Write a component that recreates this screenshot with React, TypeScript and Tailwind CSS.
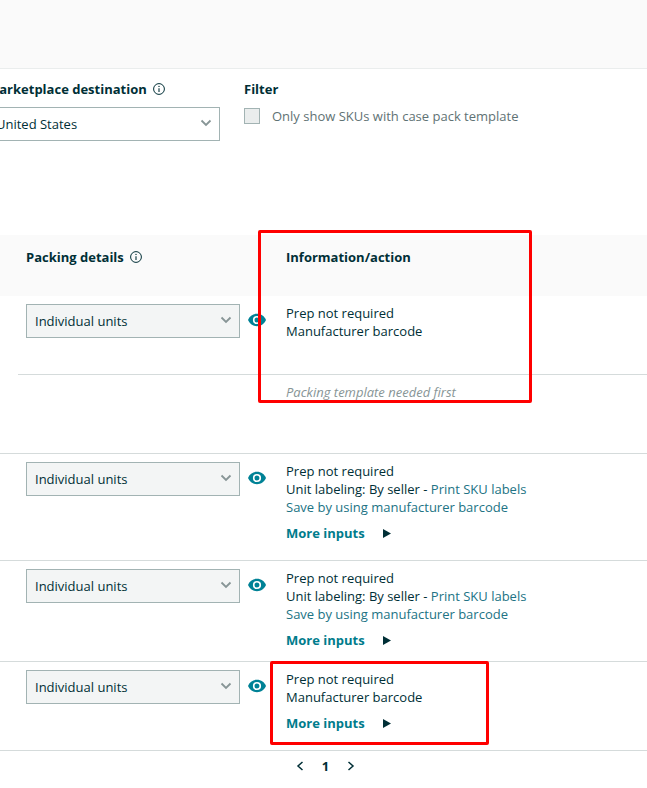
import { useState } from 'react';

type Row = {
  id: string;
  height: string;
  lines: string[];
  unitLabeling?: boolean;
  moreInputs?: boolean;
  hasTemplateRow?: boolean;
};

const rows: Row[] = [
  {
    id: 'sku-1',
    height: 'h-[79px]',
    lines: ['Prep not required', 'Manufacturer barcode'],
    hasTemplateRow: true,
  },
  {
    id: 'sku-2',
    height: 'h-[107px]',
    lines: ['Prep not required'],
    unitLabeling: true,
    moreInputs: true,
  },
  {
    id: 'sku-3',
    height: 'h-[101px]',
    lines: ['Prep not required'],
    unitLabeling: true,
    moreInputs: true,
  },
  {
    id: 'sku-4',
    height: 'h-[89px]',
    lines: ['Prep not required', 'Manufacturer barcode'],
    moreInputs: true,
  },
];

function InfoIcon() {
  return (
    <svg viewBox="0 0 12 12" className="h-3 w-3 shrink-0" fill="none" aria-hidden="true">
      <circle cx="6" cy="6" r="5.4" stroke="#002f36" strokeWidth="1" />
      <path d="M6 5.2V9" stroke="#002f36" strokeWidth="1.1" />
      <circle cx="6" cy="3.4" r="0.7" fill="#002f36" />
    </svg>
  );
}

function EyeIcon() {
  return (
    <svg viewBox="0 0 18 14" className="h-3.5 w-[18px]" aria-hidden="true">
      <path
        fill="#008296"
        fillRule="evenodd"
        d="M9 .8C4.9.8 1.5 3.3 0 7c1.5 3.7 4.900 6.200 9 6.200S16.500 10.700 18 7C16.500 3.300 13.100.8 9 .8Zm0 10.300a4.100 4.100 0 1 1 0-8.200 4.100 4.100 0 0 1 0 8.200Zm0-6.600a2.500 2.500 0 1 0 0 5 2.500 2.500 0 0 0 0-5Z"
      />
    </svg>
  );
}

function SelectBox({ id, label, option, className }: { id: string; label?: string; option: string; className: string }) {
  return (
    <div className="relative">
      <select
        id={id}
        aria-label={label}
        className={`block h-[34px] appearance-none rounded-none border border-[#a2b3b3] px-2 text-[13px] text-[#002f36] ${className}`}
      >
        <option>{option}</option>
      </select>
      <svg
        viewBox="0 0 12 8"
        className="pointer-events-none absolute top-3 right-2 h-2 w-3"
        fill="none"
        aria-hidden="true"
      >
        <path d="M1.500 1.500 6 6l4.500-4.500" stroke="#879596" strokeWidth="1.800" />
      </svg>
    </div>
  );
}

function Information({ row }: { row: Row }) {
  return (
    <>
      {row.lines.map((line) => (
        <p key={line}>{line}</p>
      ))}
      {row.unitLabeling && (
        <>
          <p>
            Unit labeling: By seller -{' '}
            <a href="#print" className="text-[#217384]">
              Print SKU labels
            </a>
          </p>
          <p>
            <a href="#barcode" className="text-[#217384]">
              Save by using manufacturer barcode
            </a>
          </p>
        </>
      )}
      {row.moreInputs && (
        <button type="button" className="mt-2 flex items-center gap-[18px] font-bold text-[#007c8c]">
          More inputs
          <svg viewBox="0 0 8 9" className="h-[9px] w-2" aria-hidden="true">
            <path d="M0 0v9l8-4.500Z" fill="#002f36" />
          </svg>
        </button>
      )}
    </>
  );
}

function SkuRow({ row }: { row: Row }) {
  const line = 'border-b border-[#d5dbdb]';

  return (
    <>
      <tr className={`${row.height} align-top`}>
        <td className={row.hasTemplateRow ? '' : line}></td>
        <td className={`pt-2 pl-2 ${line}`}>
          <div className="flex items-start gap-2">
            <SelectBox
              id={row.id}
              label="Packing details"
              option="Individual units"
              className="w-[214px] bg-[#f3f5f5]"
            />
            <button type="button" aria-label="View packing details" className="mt-2 h-4">
              <EyeIcon />
            </button>
          </div>
        </td>
        <td className={`pt-2 pl-2 ${line}`}>
          <Information row={row} />
        </td>
      </tr>
      {row.hasTemplateRow && (
        <tr className="h-[79px] align-top">
          <td className={line}></td>
          <td className={line}></td>
          <td className={`pt-2 pl-2 text-[#879596] italic ${line}`}>Packing template needed first</td>
        </tr>
      )}
    </>
  );
}

export default function App() {
  const [onlyTemplates, setOnlyTemplates] = useState(false);

  return (
    <div className="relative min-h-screen overflow-hidden bg-white font-['Open_Sans','Noto_Sans',sans-serif] text-[13px] leading-[18px] text-[#002f36]">
      <header className="h-[69px] border-b border-[#eaeded] bg-[#fafafa]"></header>

      <section className="flex h-[166px] items-start gap-6 pt-[11px]">
        <div className="-ml-[13px]">
          <div className="flex items-center gap-1.5 font-bold">
            <label htmlFor="marketplace">Marketplace destination</label>
            <InfoIcon />
          </div>
          <div className="mt-[9px]">
            <SelectBox id="marketplace" option="United States" className="w-[233px] bg-white" />
          </div>
        </div>
        <div>
          <h2 className="font-bold">Filter</h2>
          <label className="mt-[9px] flex items-center gap-3 text-[#5f7274]">
            <input
              type="checkbox"
              checked={onlyTemplates}
              onChange={(e) => setOnlyTemplates(e.target.checked)}
              className="h-4 w-4 appearance-none border border-[#a2b3b3] bg-[#eaeded] checked:bg-[#008296]"
            />
            Only show SKUs with case pack template
          </label>
        </div>
      </section>

      <table className="w-full table-fixed border-separate border-spacing-0">
        <colgroup>
          <col className="w-[18px]" />
          <col className="w-[260px]" />
          <col />
        </colgroup>
        <thead>
          <tr className="h-[61px] bg-[#fafafa] text-left align-top">
            <td></td>
            <th className="pt-[13px] pl-2 font-bold">
              <span className="flex items-center gap-1.5">
                Packing details
                <InfoIcon />
              </span>
            </th>
            <th className="pt-[13px] pl-2 font-bold">Information/action</th>
          </tr>
        </thead>
        <tbody>
          {rows.map((row) => (
            <SkuRow key={row.id} row={row} />
          ))}
        </tbody>
      </table>

      <nav aria-label="Pagination" className="flex items-center justify-center gap-[18px] pt-1.5 pl-1 font-bold">
        <button type="button" aria-label="Previous page">
          <svg viewBox="0 0 8 10" className="h-2.5 w-2" fill="none" aria-hidden="true">
            <path d="M6.500 1 2 5l4.500 4" stroke="#002f36" strokeWidth="1.500" />
          </svg>
        </button>
        <span>1</span>
        <button type="button" aria-label="Next page">
          <svg viewBox="0 0 8 10" className="h-2.5 w-2" fill="none" aria-hidden="true">
            <path d="M1.500 1 6 5 1.500 9" stroke="#002f36" strokeWidth="1.500" />
          </svg>
        </button>
      </nav>

      {/* Highlights drawn over the table */}
      <div className="pointer-events-none absolute top-[230px] left-[258px] h-[173px] w-[274px] rounded-xs border-3 border-[#ff0000]"></div>
      <div className="pointer-events-none absolute top-[661px] left-[270px] h-[84px] w-[219px] rounded-xs border-3 border-[#ff0000]"></div>
    </div>
  );
}
